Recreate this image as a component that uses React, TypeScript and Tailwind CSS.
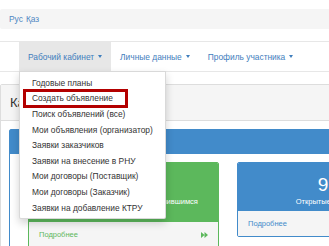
import React from 'react';

const menuItems = [
  'Годовые планы',
  'Создать объявление',
  'Поиск объявлений (все)',
  'Мои объявления (организатор)',
  'Заявки заказчиков',
  'Заявки на внесение в РНУ',
  'Мои договоры (Поставщик)',
  'Мои договоры (Заказчик)',
  'Заявки на добавление КТРУ',
];

const Caret = () => (
  <span className="ml-[4px] inline-block h-0 w-0 border-x-[2.5px] border-t-[3px] border-x-transparent border-t-current align-middle" />
);

const DoubleArrow = ({ className }: { className?: string }) => (
  <svg width="7" height="6" viewBox="0 0 7 6" className={className}>
    <path d="M0 0 L3.5 3 L0 6 Z M3.5 0 L7 3 L3.5 6 Z" fill="currentColor" />
  </svg>
);

export default function App() {
  return (
    <div className="relative h-[246px] w-[329px] overflow-hidden bg-white font-['Liberation_Sans',Arial,sans-serif] text-[8.4px] leading-[12px] text-[#333]">
      {/* language bar */}
      <div className="pt-[9px]">
        <div className="flex h-[20px] w-[360px] items-center rounded-[2px] bg-[#f5f5f5] pl-[9px] text-[#4d86c2]">
          <span>Рус</span>
          <span className="ml-[3px]">Қаз</span>
        </div>
      </div>

      {/* navbar */}
      <nav className="relative z-20 mt-[12px] flex h-[31px] w-[360px] border-y border-[#e7e7e7] bg-white pl-[19px] text-[#3f7ebd]">
        <div className="relative">
          <div className="flex h-full items-center bg-[#e7e7e7] px-[9px]">
            Рабочий кабинет <Caret />
          </div>
          <div className="absolute left-0 top-full w-[147px] rounded-b-[2px] border border-black/15 bg-white py-[3px] text-[#333] shadow-[0_4px_8px_rgba(0,0,0,0.18)]">
            {menuItems.map((item) => (
              <div key={item} className="flex h-[15.6px] items-center whitespace-nowrap px-[12px]">
                {item}
              </div>
            ))}
          </div>
        </div>
        <div className="flex h-full items-center px-[9px]">
          Личные данные <Caret />
        </div>
        <div className="flex h-full items-center px-[9px]">
          Профиль участника <Caret />
        </div>
      </nav>

      {/* main panel */}
      <div className="mt-[12px] w-[480px] rounded-[2px] border border-[#dddddd]">
        <div className="flex h-[36px] items-center border-b border-[#dddddd] bg-[#f5f5f5] px-[9px] text-[13px] text-[#333]">
          Кабинет
        </div>
        <div className="pl-[8px] pt-[8px]">
          <div className="rounded-[2px] border border-[#428bca]">
            <div className="h-[24px] bg-[#428bca]" />
            <div className="flex items-start gap-[18px] px-[18px] pt-[8px]">
              {/* green card */}
              <div className="w-[191px] shrink-0 overflow-hidden rounded-[2px] border border-[#5cb85c]">
                <div className="flex flex-col items-center bg-[#5cb85c] pb-[5px] pt-[11px] text-white">
                  <div className="h-[22px] text-[19px] leading-[22px]">3</div>
                  <div className="h-[11px] whitespace-nowrap text-[7.5px] leading-[11px]">Количество объявлений к завершившимся</div>
                  <div className="h-[10px] text-[7.5px] leading-[10px]">срокам</div>
                </div>
                <div className="flex h-[25px] items-center justify-between bg-[#f5f5f5] px-[10px] text-[7.5px] text-[#5cb85c]">
                  <span>Подробнее</span>
                  <DoubleArrow />
                </div>
              </div>

              {/* blue card */}
              <div className="w-[172px] shrink-0 overflow-hidden rounded-[2px] border border-[#428bca]">
                <div className="flex flex-col items-center bg-[#428bca] pb-[4px] pt-[11px] text-white">
                  <div className="h-[22px] text-[19px] leading-[22px]">9</div>
                  <div className="h-[11px] whitespace-nowrap text-[7.5px] leading-[11px]">Открытые лоты</div>
                </div>
                <div className="flex h-[25px] items-center justify-between bg-[#f5f5f5] px-[10px] text-[7.5px] text-[#428bca]">
                  <span>Подробнее</span>
                  <DoubleArrow />
                </div>
              </div>
            </div>
            <div className="h-[20px]" />
          </div>
        </div>
      </div>

      {/* annotation */}
      <div className="absolute left-[23px] top-[89px] z-30 h-[19px] w-[105px] border-[3px] border-[#b30000]" />
    </div>
  );
}
